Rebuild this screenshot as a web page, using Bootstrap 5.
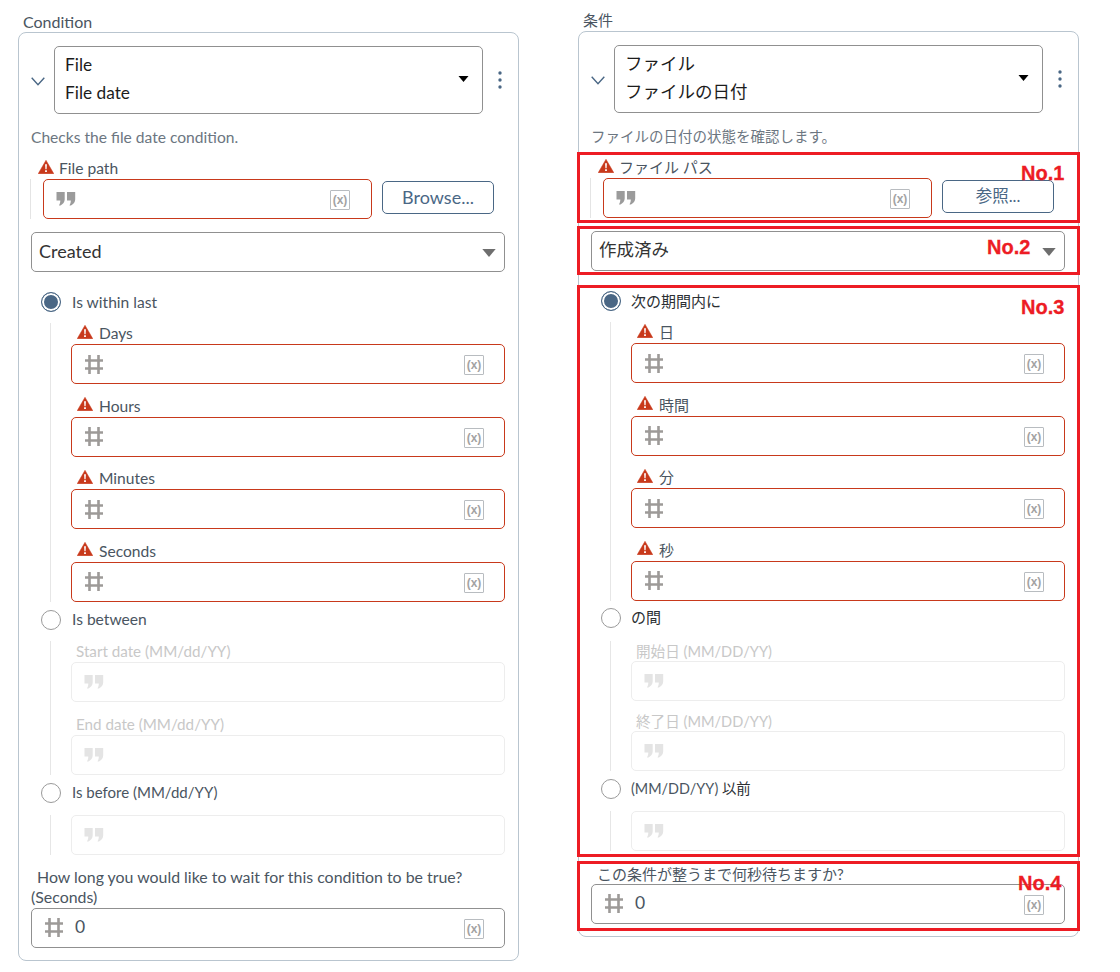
<!DOCTYPE html>
<html lang="en">
<head>
<meta charset="utf-8">
<title>Condition</title>
<link href="https://cdn.jsdelivr.net/npm/bootstrap@5.3.0/dist/css/bootstrap.min.css" rel="stylesheet">
<style>
body{font-family:Lato,"Noto Sans CJK JP",sans-serif;font-size:15.6px;line-height:21px;color:#4a5561;background:#fff}
.page-wrap{width:1120px;height:972px;padding-left:18px;gap:59px;position:relative;overflow:hidden}
.col-side{width:501px;flex:none}
.col-side.en{padding-top:11px}
.col-side.ja{padding-top:10px}
.ttl{padding-left:5px;height:21px}
.en .ttl{font-size:16px}
.panel-box{border:1px solid #b9c5cf;border-radius:8px;padding:13px 13px 12px 12px}
.chev{width:23px;flex:none}
.sel-two{width:429px;height:68px;border:1px solid #909090;border-radius:5px;padding:0 13px 2px 10px;font-size:17.3px;line-height:28px;color:#1c1c1c}
.kebab{margin-left:15px}
.desc{margin-top:13px;color:#6c7681}
.lbl{height:21px;margin-top:10px;padding-left:7px;color:#4a5561}
.lbl svg{margin-right:5px;margin-top:-4px}
.path-row{padding-left:12px;position:relative}
.path-row::before{content:"";position:absolute;left:-1px;top:0;bottom:0;border-left:1px solid #e4e4e4}
.fld{height:40px;border:1px solid #909090;border-radius:5px;padding:0 20px 0 13px;background:#fff;font-size:17.5px;color:#4a5561}
.fld.err{border-color:#c8391b}
.fld.quo{padding-left:12px;padding-right:21px;width:329px}
.fld.off{border-color:#ededed;padding-left:12px}
.vbox{width:20px;height:20px;border:1px solid #b8bcc0;font-family:"Liberation Sans",sans-serif;font-size:12px;font-weight:700;line-height:18px;text-align:center;color:#a3a3a3;border-radius:1px;margin-top:2px;flex:none}
.btn.btn-browse{width:112px;height:33px;margin-left:10px;margin-top:2px;padding:0 0 2px;border:1px solid #4a6785;border-radius:5px;color:#4a6785;font-size:18px;line-height:26px;background:#fff}
.sel-one{height:40px;margin-top:13px;border:1px solid #909090;border-radius:5px;padding:0 8px 2px 7px;font-size:18px;color:#333}
.sel-one svg{margin-top:4px}
.rad-row{height:22px;padding-left:10px;color:#4a5561}
.rad-row .form-check-input{width:20px;height:20px;margin:0 11px 0 0;flex:none;border:1px solid #9a9a9a;background-image:none}
.rad-row .form-check-input:checked{background-color:#4a6785;border:1.5px solid #4a6785;background-image:none;box-shadow:inset 0 0 0 2px #fff}
.rad-a{margin-top:19px}
.rad-b{margin-top:7px}
.before-txt{font-size:15px}
.tree{margin-left:19px;border-left:1px solid #e6e6e6;padding-left:20px;margin-top:10px;margin-bottom:2px}
.tree .lbl{margin-top:11.5px;padding-left:6px}
.tree .lbl:first-child{margin-top:0}
.tree.dis{margin-bottom:0}
.tree.dis .lbl{color:#c8c8c8;padding-left:5px;margin-top:12px;font-size:15.2px}
.tree.dis .lbl:first-child{margin-top:0}
.tree.single{margin-top:11px}
.tree .lbl svg{margin-right:6px}
.wait{margin-top:12px;line-height:20px;height:41px;text-indent:6px;font-size:15.9px}
.wait-2{text-indent:0}
.numval{margin-left:12px;padding-bottom:2px}
.ja{font-size:15px}
.ja .sel-two{font-size:17.5px}
.ja .sel-one{font-size:17.5px;padding-bottom:4px}
.ja .sel-one svg{margin-top:6px}
.ja .desc{font-size:14.5px}
.ja .btn-browse{font-size:16.5px}
.ja .rad-row{color:#2b2f33}
.ja .rad-row .form-check-input{margin-right:10px}
.ja .rad-row .latin{color:#4a5561}
.ja .tree.dis .lbl{font-size:14.6px;height:20px;margin-top:10px}
.ja .tree.dis .lbl:first-child{margin-top:0}
.ja .rad-b.second{margin-top:6px}
.ja .tree.dis{margin-top:12px}
.ja .tree.dis.single{margin-top:11px}
.ja .wait{height:20px;margin-top:13px;font-size:15px}
.ja .fixlatin{font-size:14.400px}
.qt{color:#9b9b9b}
.qt-off{color:#e4e4e4}
.hs{color:#9d9a98}
.car2{color:#6e6e6e}
.anno{position:absolute;left:577px;width:503px;border:3.300px solid #ed1c24;pointer-events:none}
.anno-1{top:152px;height:71px}
.anno-2{top:226px;height:49px}
.anno-3{top:285px;height:572px}
.anno-4{top:861px;height:70px}
.anno-t{position:absolute;font-family:"Liberation Sans",sans-serif;font-weight:700;font-size:20px;line-height:20px;color:#ed1c24;-webkit-text-stroke:.3px #ed1c24}
.t-1{left:1021px;top:163px}
.t-2{left:987px;top:237px}
.t-3{left:1021px;top:297px}
.t-4{left:1018px;top:873px}
.defs{position:absolute;width:0;height:0}
</style>
</head>
<body class="m-0">
<svg class="defs" aria-hidden="true">
<symbol id="i-warn" viewBox="0 0 16 14"><path d="M8 0.3 15.8 13.7H0.2Z" fill="#c8391b" stroke="#c8391b" stroke-width=".5" stroke-linejoin="round"/><path d="M7.1 4.2h1.8l-.3 5H7.4zM7.1 10.3h1.8v1.8H7.1z" fill="#fff"/></symbol>
<symbol id="i-quote" viewBox="0 0 20 14"><path d="M.5 0h8.200v7.500C8.700 10 7 12 4.500 13.500L3 13.500C3.800 12 4.300 10.500 4.300 8.500H.5zM11 0h8.200v7.500C19.200 10 17.500 12 15 13.500L13.500 13.500C14.300 12 14.800 10.500 14.800 8.500H11z" fill="currentColor"/></symbol>
<symbol id="i-hash" viewBox="0 0 18 19"><path d="M4.500 0v19M13.500 0v19M0 5.500h18M0 13.500h18" stroke="currentColor" stroke-width="2.600" fill="none"/></symbol>
<symbol id="i-chev" viewBox="0 0 14 9"><path d="M.7.8 7 7.800 13.300.8" stroke="#4a6785" stroke-width="1.400" fill="none"/></symbol>
<symbol id="i-caret" viewBox="0 0 10 6"><path d="M0 0h10L5 6z" fill="currentColor"/></symbol>
<symbol id="i-keb" viewBox="0 0 4 18"><circle cx="2" cy="2" r="1.700" fill="#4a6785"/><circle cx="2" cy="9" r="1.700" fill="#4a6785"/><circle cx="2" cy="16" r="1.700" fill="#4a6785"/></symbol>
</svg>
<main class="page-wrap d-flex align-items-start">

<section class="col-side en">
  <div class="ttl">Condition</div>
  <div class="panel-box">
    <div class="d-flex align-items-center">
      <div class="chev"><svg width="14" height="9"><use href="#i-chev"/></svg></div>
      <div class="sel-two d-flex align-items-center justify-content-between">
        <div><div>File</div><div>File date</div></div>
        <svg width="11" height="6" class="text-black"><use href="#i-caret"/></svg>
      </div>
      <svg class="kebab" width="4" height="18"><use href="#i-keb"/></svg>
    </div>
    <div class="desc">Checks the file date condition.</div>
    <div class="lbl d-flex align-items-center"><svg width="16" height="14"><use href="#i-warn"/></svg>File path</div>
    <div class="path-row d-flex align-items-start">
      <div class="fld quo err d-flex align-items-center justify-content-between"><svg width="20" height="14" class="qt"><use href="#i-quote"/></svg><span class="vbox">(x)</span></div>
      <button type="button" class="btn btn-browse">Browse...</button>
    </div>
    <div class="sel-one d-flex align-items-center justify-content-between">Created<svg width="14" height="8" class="car2"><use href="#i-caret"/></svg></div>
    <div class="rad-row rad-a d-flex align-items-center"><input class="form-check-input" type="radio" name="l" checked aria-label="Is within last"><span>Is within last</span></div>
    <div class="tree">
      <div class="lbl d-flex align-items-center"><svg width="16" height="14"><use href="#i-warn"/></svg>Days</div>
      <div class="fld err d-flex align-items-center justify-content-between"><svg width="18" height="19" class="hs"><use href="#i-hash"/></svg><span class="vbox">(x)</span></div>
      <div class="lbl d-flex align-items-center"><svg width="16" height="14"><use href="#i-warn"/></svg>Hours</div>
      <div class="fld err d-flex align-items-center justify-content-between"><svg width="18" height="19" class="hs"><use href="#i-hash"/></svg><span class="vbox">(x)</span></div>
      <div class="lbl d-flex align-items-center"><svg width="16" height="14"><use href="#i-warn"/></svg>Minutes</div>
      <div class="fld err d-flex align-items-center justify-content-between"><svg width="18" height="19" class="hs"><use href="#i-hash"/></svg><span class="vbox">(x)</span></div>
      <div class="lbl d-flex align-items-center"><svg width="16" height="14"><use href="#i-warn"/></svg>Seconds</div>
      <div class="fld err d-flex align-items-center justify-content-between"><svg width="18" height="19" class="hs"><use href="#i-hash"/></svg><span class="vbox">(x)</span></div>
    </div>
    <div class="rad-row rad-b d-flex align-items-center"><input class="form-check-input" type="radio" name="l" aria-label="Is between"><span>Is between</span></div>
    <div class="tree dis">
      <div class="lbl">Start date (MM/dd/YY)</div>
      <div class="fld off d-flex align-items-center"><svg width="20" height="14" class="qt-off"><use href="#i-quote"/></svg></div>
      <div class="lbl">End date (MM/dd/YY)</div>
      <div class="fld off d-flex align-items-center"><svg width="20" height="14" class="qt-off"><use href="#i-quote"/></svg></div>
    </div>
    <div class="rad-row rad-b d-flex align-items-center"><input class="form-check-input" type="radio" name="l" aria-label="Is before"><span class="before-txt">Is before (MM/dd/YY)</span></div>
    <div class="tree dis single">
      <div class="fld off d-flex align-items-center"><svg width="20" height="14" class="qt-off"><use href="#i-quote"/></svg></div>
    </div>
    <div class="wait">How long you would like to wait for this condition to be true?<span class="d-block wait-2">(Seconds)</span></div>
    <div class="fld d-flex align-items-center justify-content-between"><span class="d-flex align-items-center"><svg width="18" height="19" class="hs"><use href="#i-hash"/></svg><span class="numval">0</span></span><span class="vbox">(x)</span></div>
  </div>
</section>

<section class="col-side ja" lang="ja">
  <div class="ttl">条件</div>
  <div class="panel-box">
    <div class="d-flex align-items-center">
      <div class="chev"><svg width="14" height="9"><use href="#i-chev"/></svg></div>
      <div class="sel-two d-flex align-items-center justify-content-between">
        <div><div>ファイル</div><div>ファイルの日付</div></div>
        <svg width="11" height="6" class="text-black"><use href="#i-caret"/></svg>
      </div>
      <svg class="kebab" width="4" height="18"><use href="#i-keb"/></svg>
    </div>
    <div class="desc">ファイルの日付の状態を確認します。</div>
    <div class="lbl d-flex align-items-center"><svg width="16" height="14"><use href="#i-warn"/></svg>ファイル パス</div>
    <div class="path-row d-flex align-items-start">
      <div class="fld quo err d-flex align-items-center justify-content-between"><svg width="20" height="14" class="qt"><use href="#i-quote"/></svg><span class="vbox">(x)</span></div>
      <button type="button" class="btn btn-browse">参照...</button>
    </div>
    <div class="sel-one d-flex align-items-center justify-content-between">作成済み<svg width="14" height="8" class="car2"><use href="#i-caret"/></svg></div>
    <div class="rad-row rad-a d-flex align-items-center"><input class="form-check-input" type="radio" name="r" checked aria-label="次の期間内に"><span>次の期間内に</span></div>
    <div class="tree">
      <div class="lbl d-flex align-items-center"><svg width="16" height="14"><use href="#i-warn"/></svg>日</div>
      <div class="fld err d-flex align-items-center justify-content-between"><svg width="18" height="19" class="hs"><use href="#i-hash"/></svg><span class="vbox">(x)</span></div>
      <div class="lbl d-flex align-items-center"><svg width="16" height="14"><use href="#i-warn"/></svg>時間</div>
      <div class="fld err d-flex align-items-center justify-content-between"><svg width="18" height="19" class="hs"><use href="#i-hash"/></svg><span class="vbox">(x)</span></div>
      <div class="lbl d-flex align-items-center"><svg width="16" height="14"><use href="#i-warn"/></svg>分</div>
      <div class="fld err d-flex align-items-center justify-content-between"><svg width="18" height="19" class="hs"><use href="#i-hash"/></svg><span class="vbox">(x)</span></div>
      <div class="lbl d-flex align-items-center"><svg width="16" height="14"><use href="#i-warn"/></svg>秒</div>
      <div class="fld err d-flex align-items-center justify-content-between"><svg width="18" height="19" class="hs"><use href="#i-hash"/></svg><span class="vbox">(x)</span></div>
    </div>
    <div class="rad-row rad-b second d-flex align-items-center"><input class="form-check-input" type="radio" name="r" aria-label="の間"><span>の間</span></div>
    <div class="tree dis">
      <div class="lbl">開始日 (MM/DD/YY)</div>
      <div class="fld off d-flex align-items-center"><svg width="20" height="14" class="qt-off"><use href="#i-quote"/></svg></div>
      <div class="lbl">終了日 (MM/DD/YY)</div>
      <div class="fld off d-flex align-items-center"><svg width="20" height="14" class="qt-off"><use href="#i-quote"/></svg></div>
    </div>
    <div class="rad-row rad-b d-flex align-items-center"><input class="form-check-input" type="radio" name="r" aria-label="以前"><span class="fixlatin"><span class="latin">(MM/DD/YY)</span> 以前</span></div>
    <div class="tree dis single">
      <div class="fld off d-flex align-items-center"><svg width="20" height="14" class="qt-off"><use href="#i-quote"/></svg></div>
    </div>
    <div class="wait">この条件が整うまで何秒待ちますか?</div>
    <div class="fld d-flex align-items-center justify-content-between"><span class="d-flex align-items-center"><svg width="18" height="19" class="hs"><use href="#i-hash"/></svg><span class="numval">0</span></span><span class="vbox">(x)</span></div>
  </div>
</section>

<div class="anno anno-1"></div><div class="anno anno-2"></div><div class="anno anno-3"></div><div class="anno anno-4"></div>
<div class="anno-t t-1">No.1</div><div class="anno-t t-2">No.2</div><div class="anno-t t-3">No.3</div><div class="anno-t t-4">No.4</div>
</main>
<script src="https://cdn.jsdelivr.net/npm/bootstrap@5.3.0/dist/js/bootstrap.bundle.min.js"></script>
</body>
</html>
